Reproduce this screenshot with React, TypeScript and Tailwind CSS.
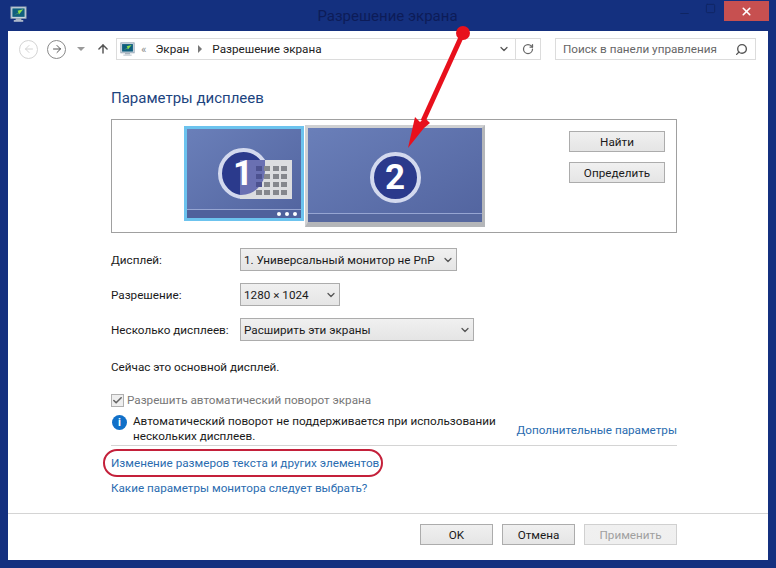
import React from "react";
import { ArrowLeft, ArrowRight, ArrowUp, ChevronDown, RotateCw, Search, X, Check, Minus, Square } from "lucide-react";

function MonitorIcon({ size = 18 }: { size?: number }) {
  return (
    <svg width={size} height={size} viewBox="0 0 18 18" className="shrink-0">
      <rect x="1" y="1" width="16" height="12" fill="#d7dfe8" stroke="#8fa0b0" />
      <rect x="2.5" y="2.5" width="13" height="9" fill="#0f5f7e" />
      <path d="M4 10 L9 7 L8 5 L14 3.5 L9.5 9 L9 7.5 Z" fill="#8fe04a" />
      <rect x="6" y="13" width="6" height="2" fill="#a7b3bd" />
      <rect x="4" y="15" width="10" height="1.6" fill="#c9d1d8" />
    </svg>
  );
}

function Dropdown({ label, width }: { label: string; width: string }) {
  return (
    <div className={`${width} h-[23px] flex items-center justify-between pl-[3px] pr-[2px] border border-[#acacac] bg-gradient-to-b from-[#f0f0f0] to-[#e5e5e5] text-[#1a1a1a]`}>
      <span className="whitespace-nowrap">{label}</span>
      <ChevronDown size={12} strokeWidth={2.5} className="text-[#555] shrink-0" />
    </div>
  );
}

function Btn({ label, width, disabled }: { label: string; width: string; disabled?: boolean }) {
  return (
    <button className={`${width} h-[21px] flex items-center justify-center border bg-gradient-to-b ${disabled ? "border-[#d0d0d0] from-[#f0f0f0] to-[#efefef] text-[#a0a0a0]" : "border-[#acacac] from-[#f0f0f0] to-[#e5e5e5] text-[#1a1a1a]"}`}>
      {label}
    </button>
  );
}

function Screen({ n, selected }: { n: string; selected?: boolean }) {
  return (
    <div className={`flex flex-col relative bg-gradient-to-br from-[#6a7fb9] to-[#52649f] ${selected ? "w-[120px] h-[95px] border-[3px] border-[#6cc3ee]" : "w-[180px] h-[102px] border-[3px] border-b-[5px] border-[#b4b6b9] border-t-[#cfd0d2] border-l-[#cfd0d2]"}`}>
      <div className="flex-1 flex items-center justify-center">
        <div className={`w-[51px] h-[51px] rounded-full bg-[#2b3a8c] border-[4px] border-[#d3d9ee] flex items-center justify-center text-white font-bold text-[35px] leading-none ${selected ? "mr-[2px] mt-[9px]" : "mt-[13px]"}`}>
          <span className="relative z-20">{n}</span>
        </div>
      </div>
      {selected && (
        <div className="absolute left-[53px] top-[31px] w-[52px] h-[39px] bg-[#dcdde0] z-10 flex justify-end pt-[6px] pr-[5px] overflow-hidden">
          <div className="absolute left-0 top-0 w-[25px] h-[35px] rounded-br-[24px] bg-[#6a70b2]" />
          <div className="relative grid grid-cols-4 grid-rows-4 gap-[2.5px] w-[31px] h-[29px]">
            {Array.from({ length: 16 }).map((_, i) => (
              <div key={i} className={i % 4 === 0 && i < 12 ? "bg-[#4d5290]" : "bg-[#85878d]"} />
            ))}
          </div>
        </div>
      )}
      <div className={`h-[9px] border-t border-[#96a5d2] flex items-center justify-end gap-[4px] pr-[4px] ${selected ? "bg-[#4f619c]" : "bg-[#56689f]"}`}>
        {selected && [0, 1, 2].map((i) => <div key={i} className="w-[4px] h-[4px] rounded-full bg-white" />)}
      </div>
    </div>
  );
}

function Row({ label, children }: { label: string; children: React.ReactNode }) {
  return (
    <div className="flex items-center h-[23px]">
      <span className="w-[129px] whitespace-nowrap text-[#1a1a1a]">{label}</span>
      {children}
    </div>
  );
}

export default function App() {
  return (
    <div className="w-[776px] h-[568px] bg-[#14307f] relative overflow-hidden flex flex-col px-2 pb-2 text-[11.7px] leading-[16px]" style={{ fontFamily: 'Roboto, "Open Sans", sans-serif' }}>
      {/* title bar */}
      <div className="h-[31px] shrink-0 flex items-start relative -mx-2">
        <div className="ml-[10px] mt-[6px]">
          <MonitorIcon size={17} />
        </div>
        <div className="flex-1 text-center pl-[70px] text-[15px] mt-[8px] text-[#0d1c58]">Разрешение экрана</div>
        <div className="flex items-start mr-[7px] mt-[1px]">
          <Minus size={13} className="text-[#0f2563] mt-[6px] mr-[14px]" />
          <Square size={11} className="text-[#0f2563] mt-[2px] mr-[8px]" />
          <div className="w-[45px] h-[20px] bg-[#c75050] flex items-center justify-center">
            <X size={13} strokeWidth={3} className="text-white" />
          </div>
        </div>
      </div>

      <div className="flex-1 bg-white flex flex-col">
        {/* toolbar */}
        <div className="h-[36px] shrink-0 flex items-center pl-[11px] pr-[12px]">
          <div className="w-[19px] h-[19px] rounded-full border-[1.5px] border-[#d4d4d4] flex items-center justify-center">
            <ArrowLeft size={12} strokeWidth={2} className="text-[#d4d4d4]" />
          </div>
          <div className="w-[19px] h-[19px] ml-[9px] rounded-full border-[1.5px] border-[#8a8a8a] flex items-center justify-center">
            <ArrowRight size={12} strokeWidth={2} className="text-[#555]" />
          </div>
          <div className="ml-[11px] w-0 h-0 border-x-[4px] border-x-transparent border-t-[4px] border-t-[#9a9a9a]" />
          <ArrowUp size={14} strokeWidth={2.5} className="ml-[11px] text-[#555]" />
          <div className="ml-[6px] w-[425px] h-[22px] border border-[#dcdcdc] flex items-center pl-[3px] text-[#222]">
            <MonitorIcon size={15} />
            <span className="ml-[6px] text-[#8a8a8a]">«</span>
            <span className="ml-[9px]">Экран</span>
            <div className="ml-[9px] w-0 h-0 border-y-[4px] border-y-transparent border-l-[4px] border-l-[#777]" />
            <span className="ml-[10px]">Разрешение экрана</span>
            <ChevronDown size={12} strokeWidth={2.5} className="ml-auto mr-[5px] text-[#555]" />
            <div className="h-full w-[25px] border-l border-[#dcdcdc] flex items-center justify-center">
              <RotateCw size={12} strokeWidth={2.5} className="text-[#666]" />
            </div>
          </div>
          <div className="ml-[14px] w-[201px] h-[22px] border border-[#dcdcdc] flex items-center justify-between pl-[7px] pr-[7px] text-[#666]">
            <span className="whitespace-nowrap">Поиск в панели управления</span>
            <Search size={13} strokeWidth={2.5} className="-scale-x-100 text-[#555]" />
          </div>
        </div>

        {/* body */}
        <div className="flex-1 flex flex-col pl-[103px] pr-[91px]">
          <h1 className="mt-[21px] text-[15px] leading-[20px] text-[#1c4480]">Параметры дисплеев</h1>

          <div className="mt-[11px] h-[114px] border border-[#a0a0a0] flex items-start">
            <div className="ml-[72px] mt-[6px]">
              <Screen n="1" selected />
            </div>
            <div className="ml-px mt-[5px]">
              <Screen n="2" />
            </div>
            <div className="ml-[84px] mt-[11px] flex flex-col gap-[10px]">
              <Btn label="Найти" width="w-[96px]" />
              <Btn label="Определить" width="w-[96px]" />
            </div>
          </div>

          <div className="mt-[15px] flex flex-col gap-[12px]">
            <Row label="Дисплей:"><Dropdown label="1. Универсальный монитор не PnP" width="w-[217px]" /></Row>
            <Row label="Разрешение:"><Dropdown label="1280 × 1024" width="w-[100px]" /></Row>
            <Row label="Несколько дисплеев:"><Dropdown label="Расширить эти экраны" width="w-[234px]" /></Row>
          </div>

          <p className="mt-[18px] text-[#1a1a1a]">Сейчас это основной дисплей.</p>

          <div className="mt-[17px] flex items-center gap-[3px] text-[#777]">
            <div className="w-[13px] h-[13px] border border-[#b0b0b0] bg-[#eee] flex items-center justify-center">
              <Check size={11} strokeWidth={3.5} className="text-[#666]" />
            </div>
            <span>Разрешить автоматический поворот экрана</span>
          </div>

          <div className="mt-[6px] flex items-start border-b border-[#d4d4d4] h-[32px]">
            <div className="w-[15px] h-[15px] mt-[1px] ml-px rounded-full bg-[#1170c8] text-white flex items-center justify-center text-[11px] font-bold leading-none">i</div>
            <p className="ml-[6px] w-[375px] leading-[15px] text-[#1a1a1a]">Автоматический поворот не поддерживается при использовании нескольких дисплеев.</p>
            <a className="ml-auto mt-[8px] whitespace-nowrap text-[#2a6cb0]">Дополнительные параметры</a>
          </div>

          <a className="mt-[9px] text-[#2a6cb0]">Изменение размеров текста и других элементов</a>
          <a className="mt-[9px] text-[#2a6cb0]">Какие параметры монитора следует выбрать?</a>
        </div>

        {/* footer */}
        <div className="h-[47px] shrink-0 border-t border-[#d4d4d4] flex items-start justify-end gap-[9px] pt-[10px] pr-[91px]">
          <Btn label="OK" width="w-[73px]" />
          <Btn label="Отмена" width="w-[73px]" />
          <Btn label="Применить" width="w-[93px]" disabled />
        </div>
      </div>

      {/* red annotations */}
      <div className="absolute left-[103px] top-[449px] w-[280px] h-[28px] rounded-full border-2 border-[#c4203a]" />
      <svg className="absolute inset-0 pointer-events-none z-30" width="776" height="568" viewBox="0 0 776 568">
        <circle cx="463" cy="33" r="7" fill="#e8101c" />
        <path d="M463 33 L423 121" stroke="#e8101c" strokeWidth="5" fill="none" />
        <path d="M408 148 L415 117 L420 122 L425 118 L430 123 L424 128 Z" fill="#e8101c" />
      </svg>
    </div>
  );
}
